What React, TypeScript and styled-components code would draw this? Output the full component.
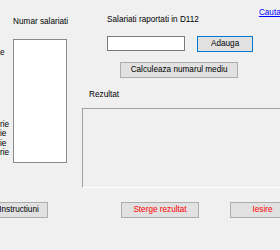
import React from 'react';
import styled, { createGlobalStyle } from 'styled-components';

const GlobalStyle = createGlobalStyle`
  html, body {
    margin: 0;
    padding: 0;
    overflow: hidden;
    background: #f0f0f0;
  }
`;

const Window = styled.div`
  width: 280px;
  height: 250px;
  overflow: hidden;
  background: #f0f0f0;
  font-family: "Liberation Sans", Arial, sans-serif;
  font-size: 8.2px;
  line-height: 10px;
  color: #000;
  display: flex;
  flex-direction: column;
`;

const TopArea = styled.div`
  display: flex;
  align-items: flex-start;
`;

const SideCol = styled.div`
  width: 10px;
  display: flex;
  flex-direction: column;
  padding-top: 48px;
`;

const SideLabel = styled.div<{ $gap?: number }>`
  height: 9.5px;
  line-height: 9.5px;
  white-space: nowrap;
  margin-top: ${(p) => p.$gap ?? 0}px;
`;

const ListCol = styled.div`
  margin-left: 4px;
  width: 54px;
  display: flex;
  flex-direction: column;
`;

const Label = styled.div`
  white-space: nowrap;
`;

const ListLabel = styled(Label)`
  padding-top: 17px;
`;

const ListBox = styled.div`
  margin-top: 12px;
  height: 124px;
  box-sizing: border-box;
  border: 1px solid #8a8a8a;
  background: #fff;
`;

const MainCol = styled.div`
  margin-left: 15px;
  width: 200px;
  flex-shrink: 0;
  display: flex;
  flex-direction: column;
`;

const HeaderRow = styled.div`
  display: flex;
  align-items: flex-start;
  padding-top: 8px;
`;

const HeaderLabel = styled(Label)`
  margin-left: 25px;
  margin-top: 7px;
`;

const LinkText = styled.a`
  margin-left: 60px;
  color: #0000ff;
  text-decoration: underline;
  white-space: nowrap;
`;

const InputRow = styled.div`
  display: flex;
  align-items: flex-start;
  margin-top: 11px;
  margin-left: 25px;
`;

const TextBox = styled.div`
  width: 78px;
  height: 15px;
  box-sizing: border-box;
  border: 1px solid #7a7a7a;
  background: #fff;
`;

const Button = styled.div<{ $w: number; $focus?: boolean; $danger?: boolean }>`
  width: ${(p) => p.$w}px;
  height: 16px;
  flex-shrink: 0;
  box-sizing: border-box;
  border: 1px solid ${(p) => (p.$focus ? '#0078d7' : '#adadad')};
  background: #e1e1e1;
  color: ${(p) => (p.$danger ? '#ff0000' : '#000')};
  display: flex;
  align-items: center;
  justify-content: center;
  white-space: nowrap;
`;

const AddButton = styled(Button)`
  margin-left: 12px;
`;

const CalcButton = styled(Button)`
  margin-top: 10px;
  margin-left: 38px;
`;

const ResultLabel = styled(Label)`
  margin-top: 11.5px;
  margin-left: 7px;
`;

const ResultBox = styled.div`
  margin-top: 8.5px;
  height: 80px;
  box-sizing: border-box;
  border-top: 1px solid #a0a0a0;
  border-left: 1px solid #a0a0a0;
  border-bottom: 1px solid #ffffff;
  border-right: 1px solid #ffffff;
`;

const BottomRow = styled.div`
  display: flex;
  align-items: flex-start;
  margin-top: 14px;
  margin-left: -10px;
`;

const Spacer = styled.div<{ $w: number }>`
  width: ${(p) => p.$w}px;
  flex-shrink: 0;
`;

const App = () => {
  return (
    <>
      <GlobalStyle />
      <Window>
        <TopArea>
          <SideCol>
            <SideLabel>e</SideLabel>
            <SideLabel $gap={62}>rie</SideLabel>
            <SideLabel>ie</SideLabel>
            <SideLabel>ie</SideLabel>
            <SideLabel>rie</SideLabel>
          </SideCol>
          <ListCol>
            <ListLabel>Numar salariati</ListLabel>
            <ListBox />
          </ListCol>
          <MainCol>
            <HeaderRow>
              <HeaderLabel>Salariati raportati in D112</HeaderLabel>
              <LinkText href="#">Cautare</LinkText>
            </HeaderRow>
            <InputRow>
              <TextBox />
              <AddButton $w={56} $focus>
                Adauga
              </AddButton>
            </InputRow>
            <CalcButton $w={118}>Calculeaza numarul mediu</CalcButton>
            <ResultLabel>Rezultat</ResultLabel>
            <ResultBox />
          </MainCol>
        </TopArea>
        <BottomRow>
          <Button $w={58}>Instructiuni</Button>
          <Spacer $w={73} />
          <Button $w={78} $danger>
            Sterge rezultat
          </Button>
          <Spacer $w={31} />
          <Button $w={65} $danger>
            Iesire
          </Button>
        </BottomRow>
      </Window>
    </>
  );
};

export default App;
